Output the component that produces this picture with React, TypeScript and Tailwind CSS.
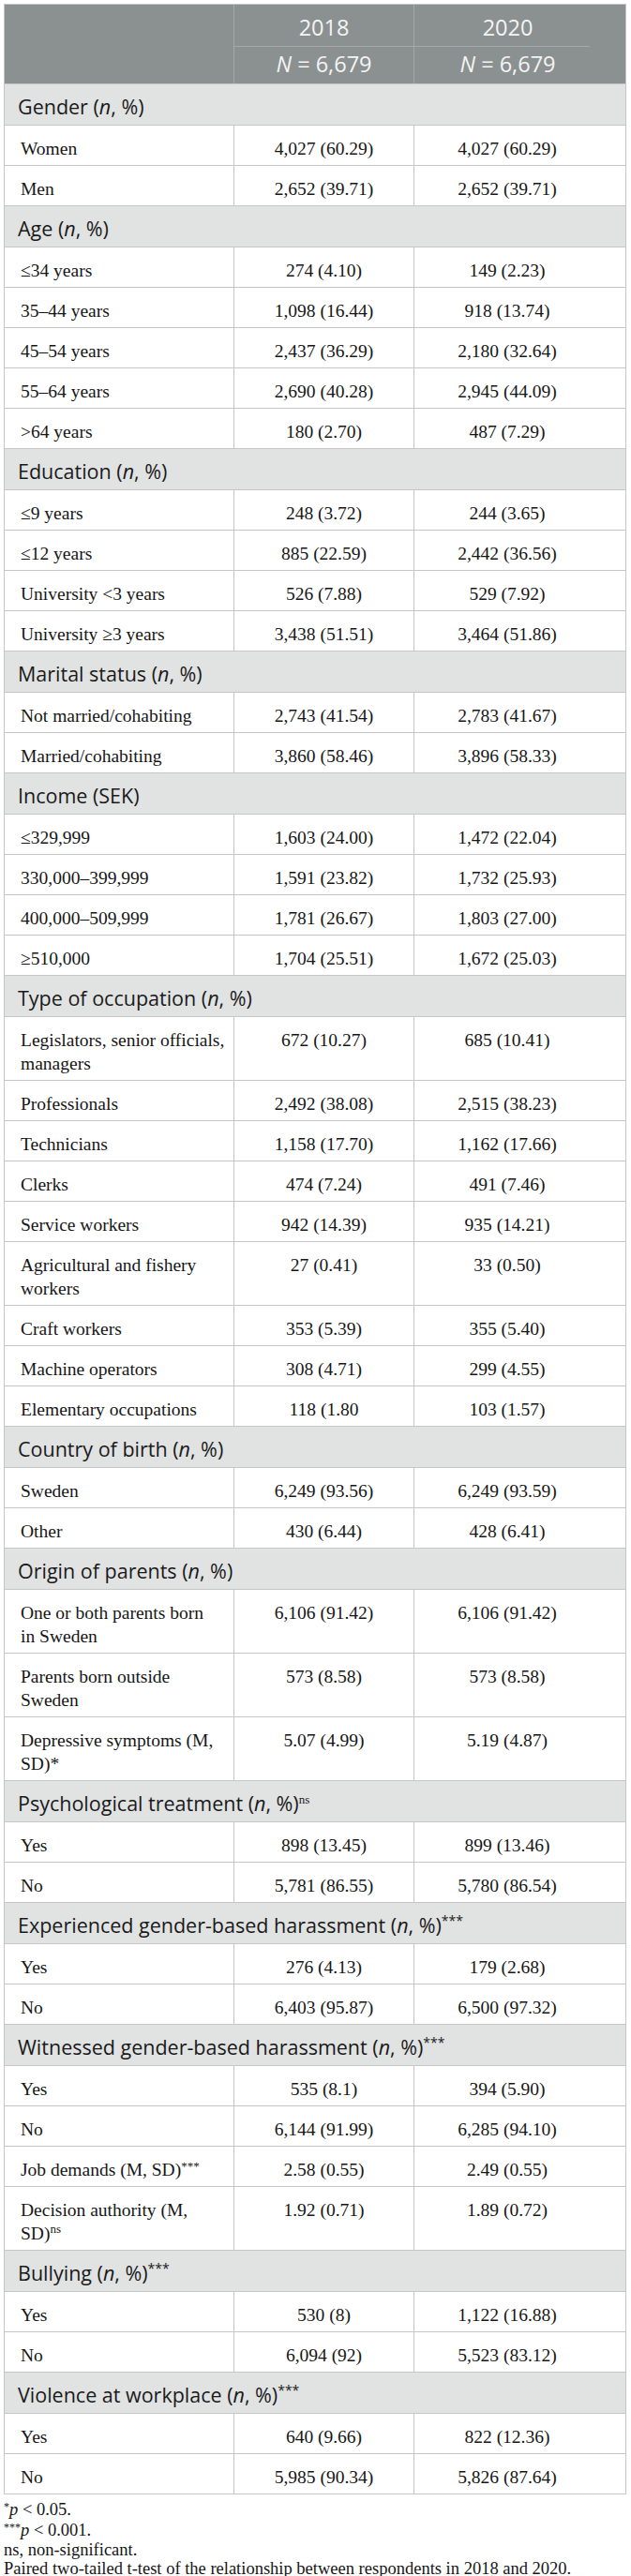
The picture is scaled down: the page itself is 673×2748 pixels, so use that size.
import React from "react";

const SERIF = "font-['Liberation_Serif','Times_New_Roman',serif]";
const SANS = "font-['Open_Sans','Noto_Sans',sans-serif]";

type Row =
  | { kind: "section"; label: React.ReactNode }
  | { kind: "data"; label: React.ReactNode; a: string; b: string };

const N = () => <i>n</i>;

const SupSans = ({ children }: { children: React.ReactNode }) => (
  <span className="relative top-[-8px] text-[14px] leading-none">{children}</span>
);
const SupSerif = ({ children }: { children: React.ReactNode }) => (
  <span className={`${SERIF} relative top-[-8px] text-[13px] leading-none`}>{children}</span>
);

const sec = (title: string, sup?: React.ReactNode): Row => ({
  kind: "section",
  label: (
    <>
      {title} (<N />, %){sup}
    </>
  ),
});
const d = (label: React.ReactNode, a: string, b: string): Row => ({ kind: "data", label, a, b });

const rows: Row[] = [
  sec("Gender"),
  d("Women", "4,027 (60.29)", "4,027 (60.29)"),
  d("Men", "2,652 (39.71)", "2,652 (39.71)"),
  sec("Age"),
  d("≤34 years", "274 (4.10)", "149 (2.23)"),
  d("35–44 years", "1,098 (16.44)", "918 (13.74)"),
  d("45–54 years", "2,437 (36.29)", "2,180 (32.64)"),
  d("55–64 years", "2,690 (40.28)", "2,945 (44.09)"),
  d(">64 years", "180 (2.70)", "487 (7.29)"),
  sec("Education"),
  d("≤9 years", "248 (3.72)", "244 (3.65)"),
  d("≤12 years", "885 (22.59)", "2,442 (36.56)"),
  d("University <3 years", "526 (7.88)", "529 (7.92)"),
  d("University ≥3 years", "3,438 (51.51)", "3,464 (51.86)"),
  sec("Marital status"),
  d("Not married/cohabiting", "2,743 (41.54)", "2,783 (41.67)"),
  d("Married/cohabiting", "3,860 (58.46)", "3,896 (58.33)"),
  { kind: "section", label: <>Income (SEK)</> },
  d("≤329,999", "1,603 (24.00)", "1,472 (22.04)"),
  d("330,000–399,999", "1,591 (23.82)", "1,732 (25.93)"),
  d("400,000–509,999", "1,781 (26.67)", "1,803 (27.00)"),
  d("≥510,000", "1,704 (25.51)", "1,672 (25.03)"),
  sec("Type of occupation"),
  d(<>Legislators, senior officials,<br />managers</>, "672 (10.27)", "685 (10.41)"),
  d("Professionals", "2,492 (38.08)", "2,515 (38.23)"),
  d("Technicians", "1,158 (17.70)", "1,162 (17.66)"),
  d("Clerks", "474 (7.24)", "491 (7.46)"),
  d("Service workers", "942 (14.39)", "935 (14.21)"),
  d(<>Agricultural and fishery<br />workers</>, "27 (0.41)", "33 (0.50)"),
  d("Craft workers", "353 (5.39)", "355 (5.40)"),
  d("Machine operators", "308 (4.71)", "299 (4.55)"),
  d("Elementary occupations", "118 (1.80", "103 (1.57)"),
  sec("Country of birth"),
  d("Sweden", "6,249 (93.56)", "6,249 (93.59)"),
  d("Other", "430 (6.44)", "428 (6.41)"),
  sec("Origin of parents"),
  d(<>One or both parents born<br />in Sweden</>, "6,106 (91.42)", "6,106 (91.42)"),
  d(<>Parents born outside<br />Sweden</>, "573 (8.58)", "573 (8.58)"),
  d(<>Depressive symptoms (M,<br />SD)*</>, "5.07 (4.99)", "5.19 (4.87)"),
  sec("Psychological treatment", <SupSerif>ns</SupSerif>),
  d("Yes", "898 (13.45)", "899 (13.46)"),
  d("No", "5,781 (86.55)", "5,780 (86.54)"),
  sec("Experienced gender-based harassment", <SupSans>***</SupSans>),
  d("Yes", "276 (4.13)", "179 (2.68)"),
  d("No", "6,403 (95.87)", "6,500 (97.32)"),
  sec("Witnessed gender-based harassment", <SupSans>***</SupSans>),
  d("Yes", "535 (8.1)", "394 (5.90)"),
  d("No", "6,144 (91.99)", "6,285 (94.10)"),
  d(<>Job demands (M, SD)<span className="relative top-[-6px] text-[13px] leading-none">***</span></>, "2.58 (0.55)", "2.49 (0.55)"),
  d(<>Decision authority (M,<br />SD)<span className="relative top-[-7px] text-[13px] leading-none">ns</span></>, "1.92 (0.71)", "1.89 (0.72)"),
  sec("Bullying", <SupSans>***</SupSans>),
  d("Yes", "530 (8)", "1,122 (16.88)"),
  d("No", "6,094 (92)", "5,523 (83.12)"),
  sec("Violence at workplace", <SupSans>***</SupSans>),
  d("Yes", "640 (9.66)", "822 (12.36)"),
  d("No", "5,985 (90.34)", "5,826 (87.64)"),
];

export default function App() {
  return (
    <div className="w-[673px] bg-white pl-[4px] pt-[4px] text-[#1a1a1a]">
      <div className="w-[664px] border border-[#c6c6c6]">
        {/* Header */}
        <div className={`flex bg-[#8b9191] text-[#f4f4f4] ${SANS} text-[23.5px] leading-[32px]`}>
          <div className="w-[245px] shrink-0 border-r border-[#a3a8a8]" />
          <div className="w-[192px] shrink-0 border-r border-[#a3a8a8] flex flex-col">
            <div className="h-[45px] pt-[8px] text-center border-b border-[#a3a8a8]">2018</div>
            <div className="h-[39px] pt-[2px] text-center">
              <i>N</i> = 6,679
            </div>
          </div>
          <div className="flex-1 flex flex-col">
            <div className="h-[45px] mr-[38px] pt-[8px] pl-[12px] text-center border-b border-[#a3a8a8]">2020</div>
            <div className="h-[39px] pt-[2px] pr-[26px] text-center">
              <i>N</i> = 6,679
            </div>
          </div>
        </div>
        {/* Body */}
        {rows.map((r, i) =>
          r.kind === "section" ? (
            <div
              key={i}
              className={`bg-[#e1e3e3] border-t border-[#c6c6c6] pl-[14px] pt-[9px] pb-[5px] ${SANS} text-[21.5px] leading-[29px] text-[#1a1a1a] whitespace-nowrap`}
            >
              {r.label}
            </div>
          ) : (
            <div key={i} className={`flex border-t border-[#c6c6c6] ${SERIF} text-[19.5px] leading-[25px] text-[#161616]`}>
              <div className="w-[245px] shrink-0 border-r border-[#c6c6c6] pl-[17px] pt-[12px] pb-[5px] whitespace-nowrap">
                {r.label}
              </div>
              <div className="w-[192px] shrink-0 border-r border-[#c6c6c6] pt-[12px] pb-[5px] text-center whitespace-nowrap">
                {r.a}
              </div>
              <div className="flex-1 pr-[27px] pt-[12px] pb-[5px] text-center whitespace-nowrap">{r.b}</div>
            </div>
          )
        )}
      </div>
      <div className={`${SERIF} text-[18.5px] leading-[19.5px] text-[#161616] pt-[7px]`}>
        <div>
          <span className="relative top-[-5px] text-[12px]">*</span>
          <i>p</i> &lt; 0.05.
        </div>
        <div>
          <span className="relative top-[-5px] text-[12px]">***</span>
          <i>p</i> &lt; 0.001.
        </div>
        <div>ns, non-significant.</div>
        <div>Paired two-tailed t-test of the relationship between respondents in 2018 and 2020.</div>
      </div>
    </div>
  );
}
